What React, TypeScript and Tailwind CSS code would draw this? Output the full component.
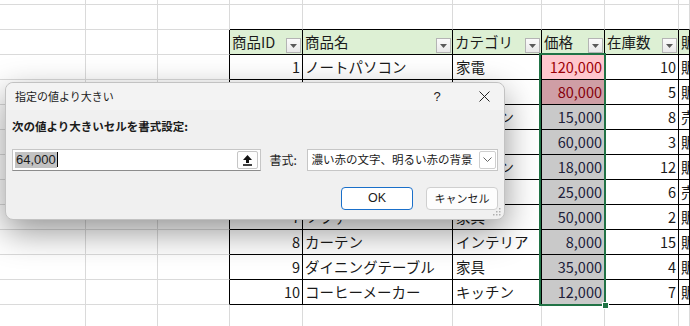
import React from 'react'

const font = "font-['Noto_Sans_CJK_JP','Noto_Sans',sans-serif]"

const widths = ['w-[86px]', 'w-[72px]', 'w-[72px]', 'w-[73px]', 'w-[150px]', 'w-[89px]', 'w-[63px]', 'w-[74px]', 'flex-1']

type Row = { id: number; name: string; cat: string; price: string; stock: number; status: string; hit?: boolean }

const rows: Row[] = [
  { id: 1, name: 'ノートパソコン', cat: '家電', price: '120,000', stock: 10, status: '販売中', hit: true },
  { id: 2, name: 'スマートフォン', cat: '家電', price: '80,000', stock: 5, status: '販売中', hit: true },
  { id: 3, name: '電気ケトル', cat: 'キッチン', price: '15,000', stock: 8, status: '売切れ' },
  { id: 4, name: 'デスク', cat: '家具', price: '60,000', stock: 3, status: '販売中' },
  { id: 5, name: 'ミキサー', cat: 'キッチン', price: '18,000', stock: 12, status: '販売中' },
  { id: 6, name: 'テレビ', cat: '家電', price: '25,000', stock: 6, status: '売切れ' },
  { id: 7, name: 'ソファ', cat: '家具', price: '50,000', stock: 2, status: '販売中' },
  { id: 8, name: 'カーテン', cat: 'インテリア', price: '8,000', stock: 15, status: '販売中' },
  { id: 9, name: 'ダイニングテーブル', cat: '家具', price: '35,000', stock: 4, status: '販売中' },
  { id: 10, name: 'コーヒーメーカー', cat: 'キッチン', price: '12,000', stock: 7, status: '販売中' },
]

function FilterButton() {
  return (
    <div className="self-end mb-[1px] mr-[1px] w-[15px] h-[15px] shrink-0 border border-[#b4b4b4] bg-gradient-to-b from-[#fbfbfb] to-[#e9e9e9] flex items-center justify-center">
      <svg width="7" height="4" viewBox="0 0 7 4">
        <path d="M0 0 L7 0 L3.5 4 Z" fill="#5a5a5a" />
      </svg>
    </div>
  )
}

// plain sheet row, light gridlines only
function BlankRow({ h, topOfTable }: { h: string; topOfTable?: boolean }) {
  return (
    <div className={`flex ${h}`}>
      {widths.map((w, i) => (
        <div
          key={i}
          className={`${w} shrink-0 border-r border-b border-r-[#dadada] ${topOfTable && i >= 3 ? 'border-b-black' : 'border-b-[#dadada]'}`}
        />
      ))}
    </div>
  )
}

function TableRow({ cells, header }: { cells: React.ReactNode[]; header?: boolean }) {
  return (
    <div className="flex h-[25px]">
      <div className="w-[86px] shrink-0 border-r border-b border-[#dadada]" />
      <div className="w-[72px] shrink-0 border-r border-b border-[#dadada]" />
      <div className="w-[72px] shrink-0 border-r border-b border-[#dadada] border-r-black" />
      {cells.map((c, i) => (
        <div
          key={i}
          className={`${widths[i + 3]} shrink-0 border-r border-b border-black overflow-hidden flex ${header ? 'bg-[#ddf0d4]' : ''}`}
        >
          {c}
        </div>
      ))}
    </div>
  )
}

function HeaderCell({ label }: { label: string }) {
  return (
    <>
      <span className="pl-[2px] self-center whitespace-nowrap text-[14.5px] leading-none text-[#1a1a1a] flex-1">{label}</span>
      <FilterButton />
    </>
  )
}

function Dialog() {
  return (
    <div className={`absolute left-[5px] top-[82px] w-[500px] h-[138px] rounded-[8px] bg-[#f0f0f0] border border-[#c2c2c2] shadow-[0_12px_34px_rgba(0,0,0,0.42)] flex flex-col ${font} text-[#1b1b1b]`}>
      {/* title bar */}
      <div className="h-[27px] flex items-center pl-[9px] rounded-t-[8px] bg-[#f3f3f3]">
        <span className="text-[11px] leading-none">指定の値より大きい</span>
        <span className="ml-auto w-[20px] mr-[17px] text-center text-[13px] leading-none font-['Liberation_Sans',sans-serif]">?</span>
        <div className="w-[40px] flex justify-center">
          <svg width="11" height="11" viewBox="0 0 11 11">
            <path d="M0.5 0.5 L10.5 10.5 M10.5 0.5 L0.5 10.5" stroke="#222" strokeWidth="1" />
          </svg>
        </div>
      </div>

      <div className="flex-1 flex flex-col px-[6px]">
        <div className="mt-[11px] text-[11.5px] font-bold leading-none">次の値より大きいセルを書式設定:</div>

        <div className="mt-[16px] flex items-center h-[22px]">
          <div className="w-[250px] h-[22px] bg-white border border-[#c6c6c6] border-b-[#8c8c8c] flex items-center">
            <span className="ml-[2px] bg-[#c2c2c2] text-[13px] leading-[16px] font-['Liberation_Sans',sans-serif] px-[1px]">64,000</span>
            <span className="w-px h-[15px] bg-black" />
            <div className="ml-auto mr-[2px] w-[21px] h-[18px] border border-[#c6c6c6] rounded-[2px] bg-[#fdfdfd] flex items-center justify-center">
              <svg width="11" height="12" viewBox="0 0 11 12">
                <path d="M5.5 1 L10 6 L7 6 L7 9 L4 9 L4 6 L1 6 Z" fill="#111" />
                <rect x="1" y="10.2" width="9" height="1.6" fill="#111" />
              </svg>
            </div>
          </div>
          <span className="ml-[8px] w-[38px] text-[12px] leading-none">書式:</span>
          <div className="w-[191px] h-[22px] bg-white border border-[#c6c6c6] flex items-center">
            <span className="pl-[3px] text-[11.5px] leading-none whitespace-nowrap">濃い赤の文字、明るい赤の背景</span>
            <div className="ml-auto mr-[1px] w-[17px] h-[18px] border border-[#cfcfcf] rounded-[2px] flex items-center justify-center">
              <svg width="9" height="5" viewBox="0 0 9 5">
                <path d="M0.5 0.5 L4.5 4.5 L8.5 0.5" stroke="#666" strokeWidth="1" fill="none" />
              </svg>
            </div>
          </div>
        </div>

        <div className="mt-[16px] flex justify-end gap-[13px]">
          <button className="w-[72px] h-[23px] rounded-[4px] bg-white border border-[#1a6fc9] text-[12.5px] leading-none font-['Liberation_Sans',sans-serif]">OK</button>
          <button className="w-[72px] h-[23px] rounded-[4px] bg-[#fdfdfd] border border-[#cfcfcf] text-[11px] leading-none">キャンセル</button>
        </div>
      </div>

      {/* size grip */}
      <svg className="absolute right-[3px] bottom-[3px]" width="8" height="8" viewBox="0 0 8 8">
        <rect x="6" y="0" width="1.5" height="1.5" fill="#b0b0b0" />
        <rect x="3" y="3" width="1.5" height="1.5" fill="#b0b0b0" />
        <rect x="6" y="3" width="1.5" height="1.5" fill="#b0b0b0" />
        <rect x="0" y="6" width="1.5" height="1.5" fill="#b0b0b0" />
        <rect x="3" y="6" width="1.5" height="1.5" fill="#b0b0b0" />
        <rect x="6" y="6" width="1.5" height="1.5" fill="#b0b0b0" />
      </svg>
    </div>
  )
}

export default function App() {
  const txt = 'text-[14.5px] leading-none whitespace-nowrap self-center'
  return (
    <div className={`relative w-[690px] h-[326px] overflow-hidden bg-white ${font} text-[#1a1a1a]`}>
      <BlankRow h="h-[5px]" />
      <BlankRow h="h-[25px]" topOfTable />
      <TableRow
        header
        cells={[
          <HeaderCell label="商品ID" />,
          <HeaderCell label="商品名" />,
          <HeaderCell label="カテゴリ" />,
          <HeaderCell label="価格" />,
          <HeaderCell label="在庫数" />,
          <span className={`${txt} pl-[2px]`}>販売状況</span>,
        ]}
      />
      {rows.map((r, idx) => {
        const priceBg = idx === 0 ? 'bg-[#ffc7ce] text-[#9c0006]' : r.hit ? 'bg-[#cf9ea5] text-[#85000a]' : 'bg-[#c9c9c9] text-[#20203a]'
        return (
          <TableRow
            key={r.id}
            cells={[
              <span className={`${txt} ml-auto pr-[2px]`}>{r.id}</span>,
              <span className={`${txt} pl-[2px]`}>{r.name}</span>,
              <span className={`${txt} pl-[3px]`}>{r.cat}</span>,
              <div className={`flex-1 flex ${priceBg}`}>
                <span className={`${txt} ml-auto pr-[2px]`}>{r.price}</span>
              </div>,
              <span className={`${txt} ml-auto pr-[2px]`}>{r.stock}</span>,
              <span className={`${txt} pl-[2px]`}>{r.status}</span>,
            ]}
          />
        )
      })}
      <BlankRow h="h-[25px]" />

      {/* selection around 価格 column */}
      <div className="absolute left-[539px] top-[53px] w-[67px] h-[253px] border-2 border-[#217346]" />
      <div className="absolute left-[602px] top-[302px] w-[7px] h-[7px] bg-[#217346] border border-white" />

      <Dialog />
    </div>
  )
}
